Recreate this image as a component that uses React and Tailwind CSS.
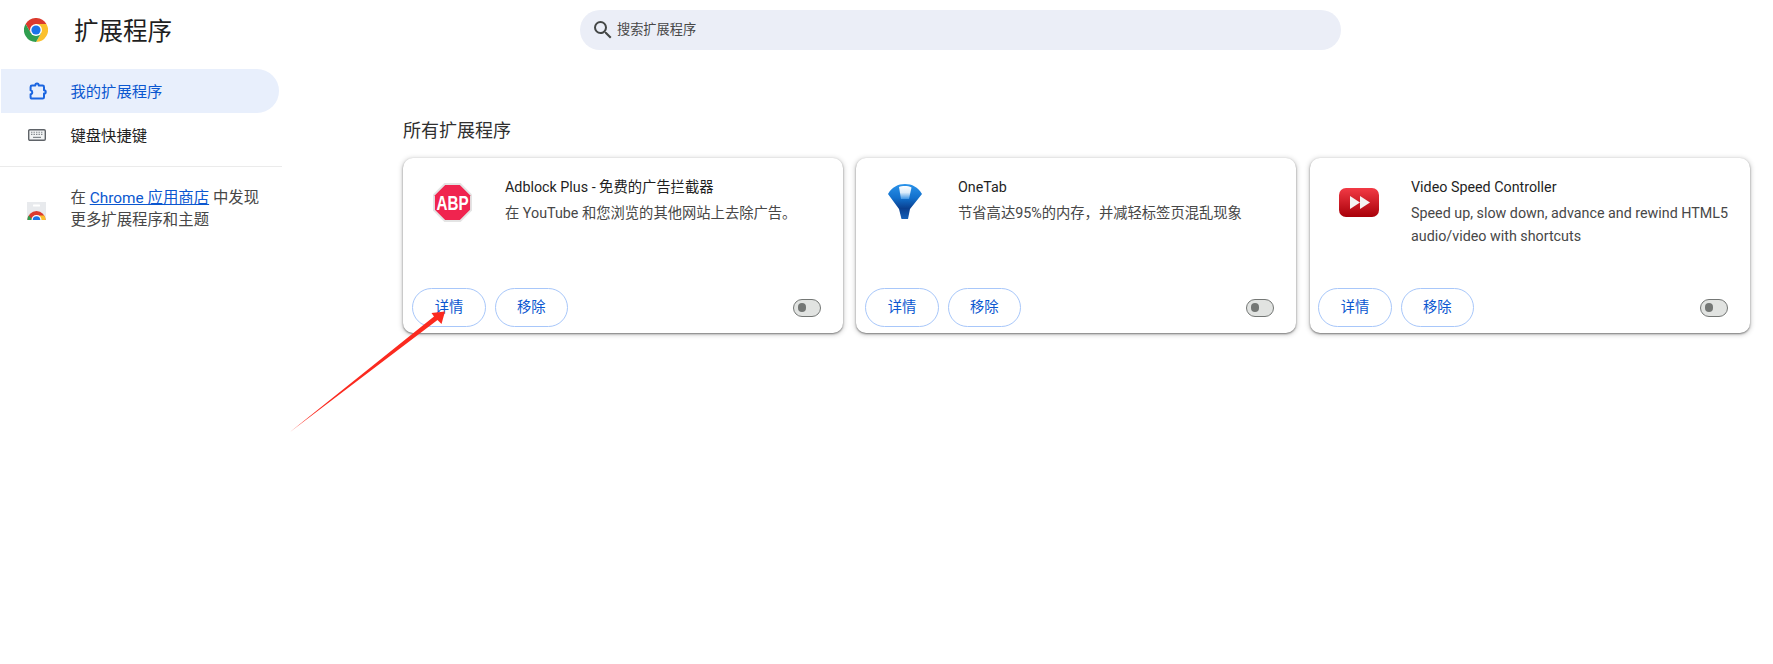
import React from "react";
import { MdSearch } from "react-icons/md";

const Chrome = ({ className }) => (
  <svg viewBox="0 0 24 24" className={className}>
    <path d="M1.6 6A12 12 0 0 1 22.4 6H12L6.8 15Z" fill="#db3a2e" />
    <path d="M22.4 6A12 12 0 0 1 12 24L17.2 15 12 6Z" fill="#fbc02d" />
    <path d="M12 24A12 12 0 0 1 1.6 6L6.8 15H17.2Z" fill="#2f9e4f" />
    <circle cx="12" cy="12" r="6" fill="#fff" />
    <circle cx="12" cy="12" r="4.6" fill="#1a73e8" />
  </svg>
);

const Extension = () => (
  <svg viewBox="0 0 18 18" className="w-[18px] h-[18px]" fill="none" stroke="#1a65e0" strokeWidth="2" strokeLinejoin="round">
    <path d="M3 3.6H6.3C6.3 0.8 9.7 0.8 9.7 3.6H13.6Q15 3.6 15 5V8.2C17.3 8.2 17.3 11.6 15 11.6V15.2Q15 16.6 13.6 16.6H3Q1.6 16.6 1.6 15.2V12.2C3.8 12 3.8 8.6 1.6 8.2V5Q1.6 3.6 3 3.6Z" />
  </svg>
);

const Keyboard = () => (
  <svg viewBox="0 0 18 12" className="w-[18px] h-[12px]">
    <rect x="0.7" y="0.7" width="16.6" height="10.6" rx="1.2" fill="#f1f3f4" stroke="#5f6368" strokeWidth="1.4" />
    <path d="M3 3.2h1.4M5.5 3.2h1.4M8 3.2h1.4M10.5 3.2h1.4M13 3.2h1.4M3 5.4h1.4M5.5 5.4h1.4M8 5.4h1.4M10.5 5.4h1.4M13 5.4h1.4" stroke="#80868b" strokeWidth="1.1" />
    <path d="M5 8.4h8" stroke="#80868b" strokeWidth="1.2" />
  </svg>
);

const Store = () => (
  <svg viewBox="0 0 19 18" className="w-[19px] h-[18px]">
    <rect width="19" height="18" fill="#e8eaed" />
    <rect x="6" y="2.4" width="7" height="2" rx="0.5" fill="#fff" />
    <path d="M0.5 18A9 9 0 0 1 18.5 18Z" fill="#db3a2e" />
    <path d="M0.5 18A9 9 0 0 1 1.7 13.5L6 18Z" fill="#2f9e4f" />
    <path d="M18.5 18A9 9 0 0 0 17.3 13.5H11L13 18Z" fill="#fbc02d" />
    <circle cx="9.5" cy="18" r="5" fill="#fff" />
    <circle cx="9.5" cy="18" r="3.8" fill="#1a73e8" />
  </svg>
);

const Abp = () => (
  <svg viewBox="0 0 40 40" className="w-[39px] h-[39px]">
    <polygon points="11.7,0 28.3,0 40,11.7 40,28.3 28.3,40 11.7,40 0,28.3 0,11.7" fill="#e4e4e4" />
    <polygon points="12.5,2 27.5,2 38,12.5 38,27.5 27.5,38 12.5,38 2,27.5 2,12.5" fill="#f0244f" />
    <text transform="translate(20 27.5) scale(0.78 1)" textAnchor="middle" fill="#fff" fontSize="20" fontWeight="700" fontFamily="'Liberation Sans', sans-serif">ABP</text>
  </svg>
);

const Funnel = () => (
  <svg viewBox="0 0 34 36" className="w-[34px] h-[36px]">
    <defs>
      <linearGradient id="fb" x1="0" x2="0" y1="0" y2="1">
        <stop offset="0" stopColor="#2a93ea" />
        <stop offset="0.4" stopColor="#1270cc" />
        <stop offset="0.7" stopColor="#0a3f8f" />
        <stop offset="1" stopColor="#1560b8" />
      </linearGradient>
      <linearGradient id="fc" x1="0" x2="0" y1="0" y2="1">
        <stop offset="0" stopColor="#ffffff" />
        <stop offset="0.5" stopColor="#dcecfa" />
        <stop offset="1" stopColor="#3f95e4" />
      </linearGradient>
    </defs>
    <path d="M0 10C4 3 10 0 17 0s13 3 17 10L22 25 20 35H13.5L11 25Z" fill="url(#fb)" />
    <path d="M11 3C14 1.6 20 1.6 23.5 3.4L21 15H13Z" fill="url(#fc)" />
  </svg>
);

const Video = () => (
  <svg viewBox="0 0 40 29" className="w-[40px] h-[29px]">
    <defs>
      <linearGradient id="va" x1="0" x2="0" y1="0" y2="1">
        <stop offset="0" stopColor="#f23a45" />
        <stop offset="1" stopColor="#a80009" />
      </linearGradient>
    </defs>
    <rect width="40" height="29" rx="7" fill="url(#va)" />
    <polygon points="11,8 21,14.5 11,21" fill="#f4f4f4" />
    <polygon points="21,8 31,14.5 21,21" fill="#f4f4f4" />
  </svg>
);

const Card = ({ icon, name, desc, cardClass, rowClass, colClass }) => (
  <div className={`w-[440px] h-[175px] bg-white rounded-[10px] shadow-[0_1px_2px_rgba(0,0,0,0.45),0_1px_5px_1px_rgba(0,0,0,0.18)] flex flex-col ${cardClass}`}>
    <div className="flex flex-1 min-h-0">
      <div className={`mr-1 h-[88px] flex items-center justify-center shrink-0 ${colClass}`}>{icon}</div>
      <div className="flex-1 pt-[18px] pr-[16px]">
        <div className="text-[14.3px] leading-[22px] text-[#1f1f1f]">{name}</div>
        <div className="text-[14.3px] leading-[22.5px] mt-[4px] text-[#474747]">{desc}</div>
      </div>
    </div>
    <div className={`flex items-center pr-[22px] pb-[6px] ${rowClass}`}>
      <button className="w-[74px] h-[39px] pt-px rounded-[19.5px] border border-[#a8c7fa] text-[14.3px] text-[#0b57d0]">详情</button>
      <button className="w-[73.5px] h-[39px] pt-px ml-[8.5px] rounded-[19.5px] border border-[#a8c7fa] text-[14.3px] text-[#0b57d0]">移除</button>
      <div className="ml-auto w-[28px] h-[18px] rounded-full bg-[#e1e3e1] border border-[#747775] flex items-center pl-[4px]">
        <div className="w-[8px] h-[9px] rounded-full bg-[#747775]" />
      </div>
    </div>
  </div>
);

export default function App() {
  return (
    <div className="relative w-[1773px] h-[664px] bg-white overflow-hidden font-['Roboto','Noto_Sans_CJK_SC',sans-serif] text-[#1f1f1f]">
      <header className="flex items-center h-[60px]">
        <div className="w-[580px] flex items-center pl-[24px] shrink-0">
          <Chrome className="w-[24px] h-[24px]" />
          <h1 className="ml-[26px] pt-[3px] text-[24.5px] font-normal leading-8 text-[#1f1f1f]">扩展程序</h1>
        </div>
        <div className="w-[761px] h-[40px] rounded-full bg-[#ebeef7] flex items-center pl-[11px] text-[13.2px] text-[#474747]">
          <MdSearch className="w-[24px] h-[24px] text-[#444746]" />
          <span className="ml-[2px]">搜索扩展程序</span>
        </div>
      </header>
      <div className="flex">
        <aside className="w-[282px] shrink-0 pt-[9px]">
          <div className="w-[278px] ml-px h-[44px] rounded-r-[22px] bg-[#e8effc] flex items-center pl-[28px] text-[#0b57d0] text-[15.3px]">
            <Extension />
            <span className="ml-[23.5px] pt-[2px]">我的扩展程序</span>
          </div>
          <div className="h-[44px] flex items-center pl-[28px] text-[15.3px] text-[#1f1f1f]">
            <Keyboard />
            <span className="ml-[24.5px] pt-[3px]">键盘快捷键</span>
          </div>
          <div className="h-px w-[282px] bg-[#ebebeb] mt-[9px]" />
          <div className="flex items-center pl-[27px] mt-[20px] text-[15.4px] leading-[22px] text-[#474747]">
            <div className="w-[19px] mt-[4px] shrink-0"><Store /></div>
            <div className="ml-[24.5px] whitespace-nowrap">
              在 <a className="text-[#0b57d0] underline">Chrome 应用商店</a> 中发现
              <br />
              更多扩展程序和主题
            </div>
          </div>
        </aside>
        <main className="pl-[121px] pt-[59px]">
          <h2 className="text-[18px] leading-6 font-normal text-[#303030] mb-[15px]">所有扩展程序</h2>
          <div className="flex gap-[13px]">
            <Card icon={<Abp />} colClass="w-[98px]" rowClass="pl-[9px]" name="Adblock Plus - 免费的广告拦截器" desc="在 YouTube 和您浏览的其他网站上去除广告。" />
            <Card icon={<Funnel />} colClass="w-[98px]" rowClass="pl-[9px]" name="OneTab" desc="节省高达95%的内存，并减轻标签页混乱现象" />
            <Card icon={<Video />} colClass="w-[97px]" cardClass="ml-px" rowClass="pl-[8px]" name="Video Speed Controller" desc="Speed up, slow down, advance and rewind HTML5 audio/video with shortcuts" />
          </div>
        </main>
      </div>
      <svg className="absolute left-0 top-0 w-[1773px] h-[664px] pointer-events-none" viewBox="0 0 1773 664">
        <polygon points="290,432 434,316.5 431.5,313 445,311.5 441.5,324 437.5,320" fill="#fb2a1f" />
      </svg>
    </div>
  );
}
